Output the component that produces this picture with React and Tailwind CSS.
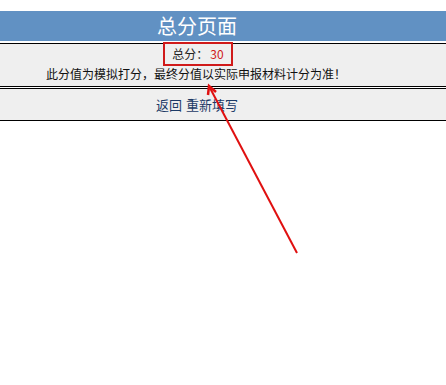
export default function App() {
  const font = { fontFamily: '"Noto Sans CJK SC", "Noto Sans", sans-serif' };
  return (
    <div className="relative w-[446px] h-[385px] bg-white pt-[11px]" style={font}>
      <div className="h-[30px] bg-[#6191c3] flex items-center justify-center pr-[52px] text-white text-[20px] leading-none">
        总分页面
      </div>
      <div className="h-[2px] bg-white" />
      <div className="border-y border-black bg-[#efefef] h-[44px] flex flex-col items-center pr-[52px]">
        <div className="mt-[-2px] ml-[2px] border-2 border-[#d01a1a] w-[70px] h-[24px] flex items-center justify-center text-[12px] text-[#222] leading-none">
          总分：<span className="text-[#d01a1a] ml-[2px]">30</span>
        </div>
        <div className="text-[12px] leading-none text-[#111] mt-[2px] ml-[-2px]">
          此分值为模拟打分，最终分值以实际申报材料计分为准！
        </div>
      </div>
      <div className="h-px bg-white" />
      <div className="border-y border-black bg-[#efefef] h-[33px] flex items-center justify-center pr-[52px] text-[13px] leading-none text-[#1c3a66]">
        <span>返回</span>
        <span className="ml-[4px]">重新填写</span>
      </div>
      <svg className="absolute left-0 top-0 pointer-events-none" width="446" height="385">
        <line x1="297" y1="253" x2="210" y2="88" stroke="#e01010" strokeWidth="2" />
        <polyline points="208,95 209,86 216,92" fill="none" stroke="#e01010" strokeWidth="2.5" />
      </svg>
    </div>
  );
}
